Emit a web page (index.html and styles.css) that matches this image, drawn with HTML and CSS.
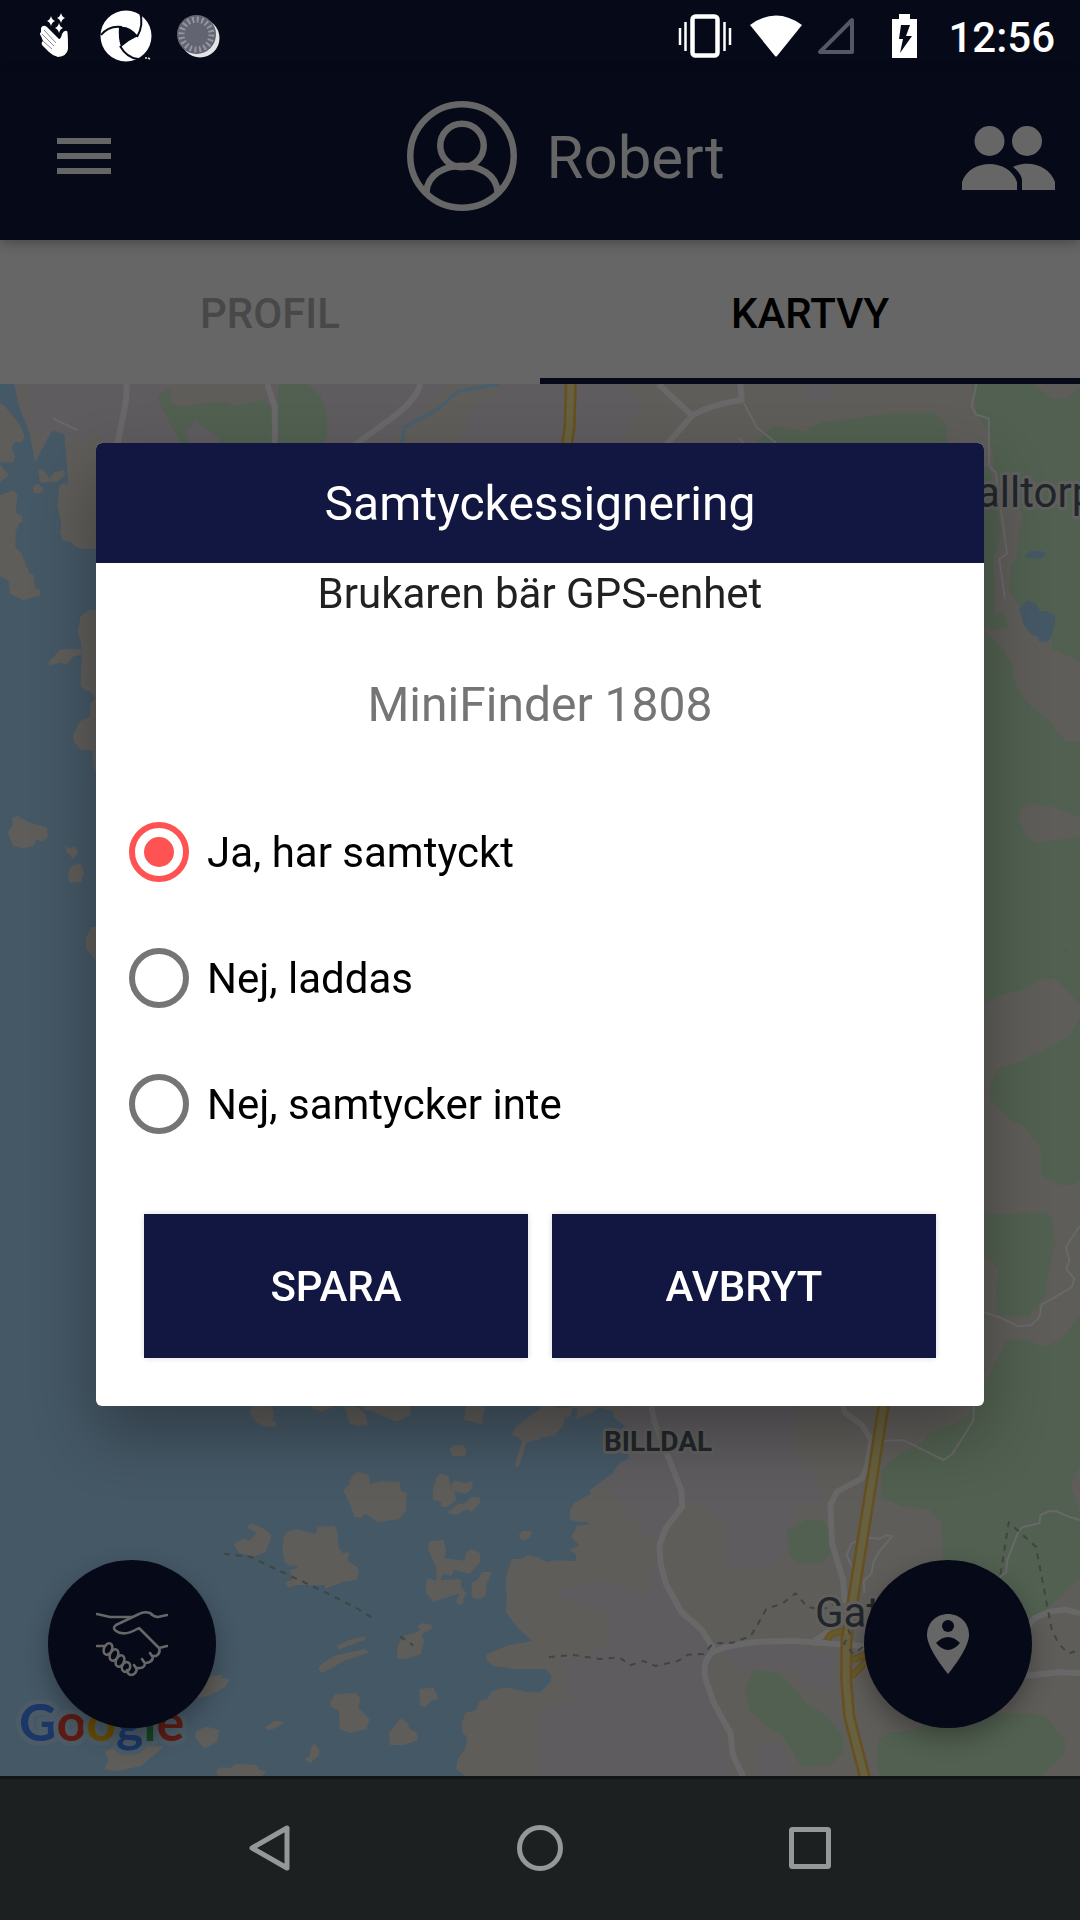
FILE: index.html
```html
<!DOCTYPE html>
<html lang="sv">
<head>
<meta charset="utf-8">
<meta name="viewport" content="width=device-width, initial-scale=1">
<title>Samtyckessignering</title>
<link rel="stylesheet" href="styles.css">
</head>
<body>
<div class="status">
  <div class="status-left">
    <svg width="31" height="46" viewBox="39 14 31 46" fill="#fff" aria-hidden="true">
      <path d="M51 17q1 4 4 5q-3 1-4 5q-1-4-4-5q3-1 4-5zM61 14q1 4 4 5q-3 1-4 5q-1-4-4-5q3-1 4-5zM59 24q1 4 4 5q-3 1-4 5q-1-4-4-5q3-1 4-5z"/>
      <path d="M41 29Q43 25 47 28L59 40Q61 40 62 35Q64 31 67 32Q68 33 68 50Q67 57 58 58Q53 57 49 53L42 46Q41 43 43 42L41 37Q39 35 41 33Z"/>
      <path d="M44 31l12 13M42 35l12 12M43 42l9 8" stroke="#8a8c95" fill="none"/>
    </svg>
    <svg class="swirl" width="52" height="52" viewBox="0 0 52 52" aria-hidden="true">
      <circle cx="26" cy="26" r="25.500" fill="#fff"/>
      <path d="M19 17Q29 15 38 26Q29 30 21 37Q18 28 19 17Z" fill="#060917"/>
      <path d="M1 25Q9 15 22 17M40 2Q44 15 37 27M20 36Q27 48 38 49" fill="none" stroke="#060917" stroke-width="2"/>
      <path d="M43 53v-6h9v6z" fill="#060917"/><path d="M45 48h2M48 48l2 1" stroke="#ddd" stroke-width="1.500"/>
    </svg>
    <svg width="43" height="45" viewBox="0 0 43 45" aria-hidden="true">
      <circle cx="23" cy="24" r="19.500" fill="#e4e4e7"/>
      <circle cx="19.500" cy="20.500" r="19.500" fill="#626471"/>
      <circle cx="19.500" cy="20.500" r="15" fill="none" stroke="#94969f" stroke-width="6" stroke-dasharray="2 2.700"/>
    </svg>
  </div>
  <div class="status-right">
    <svg width="54" height="44" viewBox="0 0 54 44" aria-hidden="true">
      <rect x="14.500" y="2.500" width="25" height="39" rx="3" fill="none" stroke="#fff" stroke-width="4.500"/>
      <path d="M2 14v17M7.500 8v29M46.500 8v29M52 14v17" stroke="#fff" stroke-width="2.500"/>
    </svg>
    <svg class="wifi" width="52" height="42" viewBox="0 0 52 42" fill="#fff" aria-hidden="true"><path d="M0 10Q26-9 52 10L27 41q-1 1-2 0z"/></svg>
    <svg class="signal" width="38" height="38" viewBox="0 0 38 38" fill="none" stroke="#555764" stroke-width="4" stroke-linejoin="round" aria-hidden="true"><path d="M3 35L35 3V35Z"/></svg>
    <svg class="battery" width="25" height="44" viewBox="0 0 25 44" aria-hidden="true"><path d="M7 0h11v5h7v39H0V5h7z" fill="#fff"/><path d="M9 11h9l-4 11h6L8 39l3-14H7z" fill="#060917"/></svg>
    <span class="clock">12:56</span>
  </div>
</div>

<header class="appbar">
  <button class="menu" type="button" aria-label="Meny">
    <svg width="54" height="36" viewBox="0 0 54 36" fill="#666"><path d="M0 0h54v6H0zM0 15h54v6H0zM0 30h54v6H0z"/></svg>
  </button>
  <div class="person">
    <svg width="110" height="110" viewBox="0 0 110 110" fill="none" stroke="#666" stroke-width="6.500" aria-hidden="true">
      <circle cx="55" cy="55" r="51.750"/><circle cx="55" cy="44.500" r="21.750"/>
      <path d="M19.500 91C21 56 89 56 90.500 91"/>
    </svg>
    <span>Robert</span>
  </div>
  <button class="people" type="button" aria-label="Brukare">
    <svg width="94" height="66" viewBox="0 0 94 66" fill="#666">
      <circle cx="27.500" cy="17" r="15"/><circle cx="65" cy="17" r="15"/>
      <path d="M0 66V58C8 34 47 34 55 58V66ZM51 43C68 35 88 43 93 58V66H60V56Q59 49 51 43Z"/>
    </svg>
  </button>
</header>

<nav class="tabs">
  <a class="tab" href="#profil">PROFIL</a>
  <a class="tab active" href="#kartvy" aria-current="page">KARTVY</a>
</nav>

<main class="map">
  <svg class="map-art" viewBox="0 384 1080 1392" preserveAspectRatio="xMidYMid slice" aria-hidden="true">
    <rect class="land" y="384" width="1080" height="1392"/>

    <!-- northern edge -->
    <g transform="translate(0 220) scale(.6887 .3333)">
      <path class="town" d="M85 492H245V560L390 550V492H650L560 680H60V600H0V560L80 520ZM480 492H620L500 680H475ZM690 560L740 492H900L930 560L900 680H660Z"/>
      <path class="green" d="M247 503L247 548L264 563L295 550L328 545L340 558L384 537L397 580V680H320L319 657L284 604L268 636L280 680H265L238 575L228 530ZM404 492H446L466 530L475 580V640L468 680H404Z"/>
      <path class="green" d="M1100 665L1123 618L1168 634L1196 603L1220 602L1293 578H1357L1375 620V680H1105Z"/>
      <path class="town" d="M1168 492H1205L1208 540L1180 553L1168 535Z"/>
      <path class="thin" d="M77 598L112 630M1080 550L1100 625L1127 668M1073 655L1085 680"/>
      <path class="road" d="M184 492L183 540L170 680M388 492L399 560V680M610 492Q607 530 575 585L512 680"/>
      <path class="road" d="M956 492L1005 587Q1030 555 1077 540L1075 492M1005 587L965 680"/>
      <path class="stream" d="M725 492L665 514L635 568L587 622L583 680"/>
      <path class="hw-case" d="M829 480L827 620L823 680"/><path class="hw" d="M829 480L827 620L823 680"/>
    </g>

    <!-- western shore -->
    <path class="water" d="M0 384H14L20 410L29 430L35 462L52 430L64 431L68 480L60 500L62 540L96 548V1776H0Z"/>
    <g transform="translate(0 380) scale(.3333 .6631)">
      <path class="land" d="M46 6L70 26L88 62L84 78L142 84L157 76L194 82L202 110L216 144L243 149L230 162L211 165L194 155L178 160L172 190L185 220L180 232L211 240L222 250L245 255H300V6Z"/>
      <path class="land" d="M0 35L10 37L40 55L60 68L75 86L64 94H44L36 102L46 116L39 124H0ZM0 127L27 144L0 154ZM0 174L40 166L53 174L46 200L67 206V213L56 217L47 230L46 252L63 260L88 291L101 294L105 313L121 318L119 325L70 332L30 322L25 302L0 296ZM114 135H130L148 149L163 139L191 136L196 142L174 153L120 155ZM98 160L114 156L132 166L113 172L100 170ZM300 347H266L241 357L234 380L242 395L246 414L241 460L250 467L272 470L286 480L270 488L271 507L240 515L219 535L222 545L240 557L278 559L282 590H300ZM146 425L183 406H244V414L220 417L198 429L178 426L148 431ZM23 682L38 671L37 660L52 657L86 667L141 675L144 690L127 696L108 693L103 702L70 706L40 703ZM195 703L210 706L228 704L235 713L218 722L199 711ZM203 744L216 732L240 729L253 743L243 757L208 758ZM300 825H274L257 843L258 858L290 877H300Z"/>
      <path class="town" d="M88 0H300V70L250 90L200 94L194 82L157 76L142 84L88 68Z"/>
      <path class="thin" d="M158 58L234 76"/>
    </g>

    <!-- eastern forest -->
    <rect class="green" x="970" y="384" width="110" height="1040"/>
    <g transform="translate(970 380) scale(.3333 .6631)">
      <path class="land" d="M190 6H330V10L292 28H246Z"/>
      <path class="land" d="M0 0L20 50L58 80L74 132L88 180L160 200L144 235L143 262L122 282L117 315L148 342L172 362L245 392V405L330 425V545H285L240 515L170 485L133 455L127 430L100 405L40 378L75 350L70 270L95 230L60 132L0 130ZM145 660L152 647L180 639L250 644L330 659V688L205 698L173 692ZM43 940L98 927L155 920L210 904L255 903L290 920L330 942V960L298 990L155 1027L88 1037L59 1062V1086L125 1117L155 1123L213 1157V1198L265 1214H310L330 1207V1410L275 1446L220 1458L160 1447L110 1447L30 1530V1290Z"/>
      <path class="green" d="M43 1256L100 1259L150 1256H228L248 1266L256 1303L228 1360L229 1378L177 1412H90L75 1398L85 1340L43 1320ZM52 358L60 352H106L113 374L58 377Z"/>
      <path class="water" d="M148 345L172 332L200 338L208 348L230 349L256 356L252 375L236 394L208 395L205 388L184 384L162 370ZM165 265L180 258H215L229 263L214 269H175ZM283 858L292 861L288 864Z"/>
      <path class="thin" d="M22 0L5 40L18 52L56 58L58 130L78 140L111 262L88 270L105 330M43 1406L90 1414L145 1427L185 1425L208 1413L215 1394L245 1386L305 1368L313 1356L289 1340L298 1328L288 1307L330 1275"/>
    </g>

    <!-- archipelago -->
    <rect class="water" y="1390" width="540" height="386"/>
    <g transform="translate(0 1380) scale(.3444 .3333)">
      <path class="land" d="M730 74L726 98L743 127L765 138L797 141L803 129L792 120L795 97L785 74ZM905 74V85L933 95L962 84V74ZM1000 78L1015 130L1035 138L1068 136L1062 105L1040 82ZM1055 74V90L1080 93L1152 126L1192 104V74ZM1352 74L1347 120L1375 126L1403 135L1399 111L1406 96L1409 74ZM1570 85L1520 122L1497 140L1487 166L1506 171L1516 183L1494 259L1506 261L1529 186L1570 178ZM1306 207L1320 195L1346 196L1355 213L1349 228H1314ZM996 331L1013 315L1020 291L1038 275L1071 285L1073 313L1105 304L1162 306L1163 332L1180 340L1179 390L1159 418L1097 426L1061 401L1047 413L1029 410L1014 366ZM1257 360L1257 329L1268 290L1280 281L1302 288L1308 317L1319 302L1350 310L1369 303L1373 324L1353 341L1320 333L1324 360L1300 380H1281V366ZM1296 399L1330 373L1352 370L1368 350L1392 351L1395 368L1369 395L1356 387L1324 404ZM679 492L707 475L726 482L744 459L716 441L729 430L767 446L789 467L772 515L740 529L693 518ZM820 515L824 470L834 455L860 448L917 461L922 440L972 437L980 455L983 502L995 520L1013 516L1010 544L1037 561L1042 580L1033 600L997 605L943 627L944 615H862L838 623L827 608L850 598L841 571L863 565V558L838 556L826 545ZM1243 510L1245 483L1288 480L1295 512L1290 535L1350 542L1351 520L1369 508L1394 520V547L1363 582L1318 569L1310 588L1286 582L1280 600L1338 598L1339 621L1355 640L1345 657V670L1333 676L1324 665L1334 640L1258 666L1236 637L1240 595L1267 603V562ZM1369 643L1370 610L1388 598L1399 576L1429 575L1413 612L1412 643L1397 657L1374 655ZM1505 468L1517 453L1547 454L1537 475L1517 482ZM1570 532L1530 526L1513 537H1487L1471 580L1468 623L1472 655L1469 697L1500 740L1545 783L1477 796L1412 823V840L1433 858L1495 867H1570Z"/>
      <path class="land" d="M981 810V796L1012 780L1060 768V779ZM924 869L931 854L970 827L1060 807L1072 817L1000 842L936 879ZM1152 838L1155 795L1171 768L1202 760L1220 750L1213 740L1225 729L1254 734L1253 748L1223 763L1232 780L1223 821L1188 835ZM570 955L600 890L648 884L640 894L667 897L655 920L610 946ZM1217 927L1258 923L1275 956L1253 963L1235 981L1220 976ZM959 967L973 942L1034 939L1046 953L1041 983L1074 1019L1063 1048L1015 1060L986 1046L984 992L962 981ZM769 1043L797 1022L829 1027L799 1045L778 1050ZM1129 1060L1163 1015L1183 1028L1189 1046L1210 1058L1214 1080L1175 1095H1132ZM567 1054L600 1040L636 1049L630 1085L594 1106L568 1076ZM885 1139L901 1125L904 1100L913 1091L927 1110V1126L902 1149ZM302 1168L314 1140L305 1115L340 1095L475 1100L410 1158L340 1173ZM627 1173L640 1162L668 1164L686 1151L745 1155L755 1169L773 1175L760 1190H635ZM1570 938L1530 936L1470 922L1428 934L1413 960L1394 961L1382 990L1352 998L1342 1025L1343 1060L1356 1070L1352 1105L1329 1137L1324 1168L1355 1190H1570Z"/>
      <path class="dash" d="M650 521L730 532L800 567L945 637L1040 687L1080 713M1162 770L1200 796"/>
    </g>

    <!-- Billdal and the coast road -->
    <g transform="translate(540 1380) scale(.3444 .3333)">
      <path class="town" d="M250 75H745V240L800 290L820 360L730 390L740 470L690 560L540 570L530 420L430 350L340 500L200 340L150 310ZM30 640L190 600L300 640L350 550L410 700L480 790L700 790L870 820L830 950L730 870L600 880L500 810L490 900L560 1190H0V990L90 960L60 850L200 800L190 700ZM640 1100L690 1090L725 1150V1190H620Z"/>
      <path class="green" d="M717 450L773 421H820L844 458V520L816 550H745L723 522ZM620 869L695 880L747 932L770 970L827 1003L880 1068V1120L840 1157H757L704 1066L657 1038L608 990L595 928ZM980 1080L1010 1060L1090 1048L1150 1020L1260 1000H1440L1470 1010L1524 1080V1122L1455 1190H990L979 1160ZM1290 75L1210 130L1130 157L1110 190L1040 225L992 270V353L1055 380L1130 388L1166 427L1175 600L1250 760L1400 760L1568 592V400L1541 317L1568 255V75Z"/>
      <path class="water" d="M-2 173L42 167L67 137L71 112L88 110L95 84L110 84L105 118L150 98L172 82L215 95L212 110L246 137L258 235L230 250L210 280L143 332L150 340L98 370L87 390V418L102 424L140 427L145 433L107 437L90 472L114 495L85 510L105 523L104 543L40 541L22 546L-2 536ZM30 75H92V80L50 84ZM-2 867H16L32 884V905L-2 938Z"/>
      <path class="thin" d="M1260 75L1258 122L1197 222L1172 240L1057 181L1000 182M942 640L940 603L963 580L968 545L985 515L1023 468L1005 466L985 477L950 472L905 490L890 525L910 570M1568 420L1540 412L1500 394H1478L1453 405L1450 430L1403 441L1390 452L1357 540L1353 577L1335 592"/>
      <path class="road" d="M323 75L333 130L372 230L410 330L413 380L365 445L347 495L350 550L365 610L410 695L470 750L503 805M590 1190L560 1125L553 1060L505 970L480 895Q470 840 503 815Q560 790 640 785L740 783L900 795L950 800M880 75L885 98L935 135L962 180L950 260L935 295L862 335L843 375L848 490L880 600L885 670M800 798V780L860 740M1400 888L1510 877L1568 880M1400 760L1435 715L1480 695L1525 689L1568 700"/>
      <path class="hw-case ramp" d="M835 780Q840 755 880 755M905 840L955 820M905 890L955 835"/>
      <path class="hw ramp" d="M835 780Q840 755 880 755M905 840L955 820M905 890L955 835"/>
      <path class="hw-case" d="M1000 60L970 260L915 620L890 780L889 900L898 1010L945 1200"/>
      <path class="hw" d="M1000 60L970 260L915 620L890 780L889 900L898 1010L945 1200"/>
      <path class="dash" d="M26 831L95 825L175 837L230 832L262 856L300 843L335 858L400 843L430 824L475 822L503 790L560 788L612 768L628 740L657 687L705 670L742 640L775 680L820 690L865 665L900 760L883 790L910 822L945 795M1337 583L1361 427L1440 500L1485 745L1505 790L1535 821L1568 808"/>
    </g>

    <text class="place" x="977" y="507" font-size="42">alltorp</text>
    <text class="place area" x="604" y="1451" font-size="28">BILLDAL</text>
    <text class="place" x="815" y="1627" font-size="42">Gat</text>
    <text class="google" x="19" y="1741" font-size="52"><tspan fill="#1b3767">G</tspan><tspan fill="#5e1b14">o</tspan><tspan fill="#654b02">o</tspan><tspan fill="#1b3767">g</tspan><tspan fill="#154421">l</tspan><tspan fill="#5e1b14">e</tspan></text>
  </svg>

  <div class="fabs">
    <button class="fab" type="button" aria-label="Samtycke">
      <svg width="72" height="68" viewBox="0 0 72 68" fill="none" stroke="#676767" stroke-width="2.600" stroke-linejoin="round" stroke-linecap="round">
        <path d="M1 4L14 7H36M71 5L62 7Q58 7 54 3Q48 1 43 4L20 15Q16 18 20 21Q28 27 43 18L63 38Q65 43 60 46H57Q57 53 49 53Q49 59 41 58Q40 65 35 65Q31 64 31 60M71 36L63 38M1 36H8M48 52L46 49M56 46L54 43M40 58L38 55"/>
        <ellipse cx="12" cy="39" rx="4" ry="6" transform="rotate(25 12 39)"/><ellipse cx="18" cy="45" rx="4" ry="6" transform="rotate(25 18 45)"/><ellipse cx="24" cy="51" rx="4" ry="6" transform="rotate(25 24 51)"/><ellipse cx="30" cy="57" rx="4" ry="5" transform="rotate(25 30 57)"/>
      </svg>
    </button>
    <button class="fab" type="button" aria-label="Visa position">
      <svg width="42" height="60" viewBox="0 0 42 60"><path d="M21 0C9 0 0 9 0 21C0 35 21 60 21 60S42 35 42 21C42 9 33 0 21 0Z" fill="#666"/><circle cx="21" cy="12" r="6" fill="#060917"/><path d="M9 29Q21 17 33 29Q21 43 9 29Z" fill="#060917"/></svg>
    </button>
  </div>
</main>

<nav class="sysnav">
  <button type="button" aria-label="Tillbaka"><svg width="46" height="46" viewBox="0 0 46 46"><path d="M5 23L40 3V43Z"/></svg></button>
  <button type="button" aria-label="Hem"><svg width="46" height="46" viewBox="0 0 46 46"><circle cx="23" cy="23" r="20.500"/></svg></button>
  <button type="button" aria-label="Översikt"><svg width="46" height="46" viewBox="0 0 46 46"><rect x="4.500" y="4.500" width="37" height="37" rx="1"/></svg></button>
</nav>

<div class="overlay">
  <form class="dialog" role="dialog" aria-labelledby="dialog-title">
    <h1 class="dialog-title" id="dialog-title">Samtyckessignering</h1>
    <p class="lead">Brukaren bär GPS-enhet</p>
    <p class="device">MiniFinder 1808</p>
    <div class="choices">
      <label class="choice"><input type="radio" name="consent" checked><span>Ja, har samtyckt</span></label>
      <label class="choice"><input type="radio" name="consent"><span>Nej, laddas</span></label>
      <label class="choice"><input type="radio" name="consent"><span>Nej, samtycker inte</span></label>
    </div>
    <div class="actions">
      <button class="action" type="button">SPARA</button>
      <button class="action" type="button">AVBRYT</button>
    </div>
  </form>
</div>
</body>
</html>
```
FILE: styles.css
```css
* { box-sizing: border-box; }

body {
  margin: 0;
  min-height: 100vh;
  display: flex;
  flex-direction: column;
  background: #060917;
  font-family: Roboto, "Liberation Sans", sans-serif;
  font-size: 42px;
}

button {
  border: 0;
  padding: 0;
  background: none;
  color: inherit;
  font: inherit;
}

svg { display: block; flex: none; }

/* System status bar */
.status {
  height: 72px;
  padding: 0 25px 0 39px;
  display: flex;
  justify-content: space-between;
  color: #fff;
}
.status-left, .status-right { display: flex; align-items: center; }
.status-left { gap: 30px; }
.swirl { margin-right: -5px; }
.wifi { margin-left: 18px; }
.signal { margin-left: 15px; }
.battery { margin-left: 37px; }
.clock { margin-left: 31px; padding-top: 2px; font-weight: 500; }

/* App bar */
.appbar {
  position: relative;
  z-index: 1;
  height: 168px;
  display: flex;
  align-items: center;
  background: #060917;
  color: #666;
  box-shadow: 0 3px 12px rgba(0, 0, 0, .3);
}
.menu { width: 170px; padding-left: 57px; }
.people { width: 118px; padding-top: 2px; }
.person {
  flex: 1;
  display: flex;
  align-items: center;
  justify-content: center;
  gap: 29px;
  font-size: 60px;
}
.person span { padding-top: 2px; }

/* Tabs */
.tabs { display: flex; height: 144px; background: #666; }
.tab {
  flex: 1;
  display: flex;
  align-items: center;
  justify-content: center;
  padding-top: 8px;
  border-bottom: 6px solid transparent;
  color: #484848;
  font-weight: 500;
  text-decoration: none;
}
.tab.active { color: #000; border-color: #060917; }

/* Map */
.map { position: relative; flex: 1; overflow: hidden; display: flex; align-items: flex-end; }
.map-art { position: absolute; inset: 0; width: 100%; height: 100%; }
.map-art path { vector-effect: non-scaling-stroke; }
.land { fill: #5f5d5a; }
.town { fill: #5f5c60; }
.green { fill: #516050; }
.water { fill: #455866; }
.thin, .road, .stream, .dash, .hw, .hw-case { fill: none; stroke-linejoin: round; }
.thin { stroke: #696869; stroke-width: 2px; }
.road { stroke: #686868; stroke-width: 6px; }
.stream { stroke: #455f70; stroke-width: 3px; }
.dash { stroke: #3f463f; stroke-width: 2px; stroke-dasharray: 6px 6px; }
.hw-case { stroke: #66501f; stroke-width: 12px; }
.hw { stroke: #676041; stroke-width: 7px; }
.hw-case.ramp { stroke-width: 7px; }
.hw.ramp { stroke: #66592c; stroke-width: 4px; }
.place {
  fill: #22262a;
  stroke: #60605e;
  stroke-width: 6px;
  stroke-linejoin: round;
  paint-order: stroke;
}
.place.area { font-weight: 700; }
.google {
  font-family: Lato, sans-serif;
  font-weight: 700;
  stroke: #4c5b66;
  stroke-width: 10px;
  stroke-linejoin: round;
  paint-order: stroke;
}

.fabs {
  position: relative;
  flex: 1;
  display: flex;
  justify-content: space-between;
  padding: 48px;
}
.fab {
  width: 168px;
  height: 168px;
  display: flex;
  align-items: center;
  justify-content: center;
  border-radius: 50%;
  background: #060917;
  box-shadow: 0 10px 24px rgba(0, 0, 0, .3);
}

/* System navigation */
.sysnav {
  height: 144px;
  padding: 0 135px 3px;
  display: flex;
  border-top: 3px solid #131517;
  background: #1c2021;
}
.sysnav button { flex: 1; display: flex; align-items: center; justify-content: center; }
.sysnav svg { fill: none; stroke: #969798; stroke-width: 5px; stroke-linejoin: round; }

/* Consent dialog */
.overlay {
  position: fixed;
  z-index: 2;
  inset: 72px 0 144px;
  padding: 0 96px;
  display: flex;
  align-items: center;
}
.dialog {
  flex: 1;
  overflow: hidden;
  border-radius: 6px;
  background: #fff;
  color: #000;
  text-align: center;
  box-shadow: 0 28px 64px rgba(0, 0, 0, .32);
}
.dialog-title, .lead, .device { margin: 0; font-weight: 400; }
.dialog-title {
  padding-top: 2px;
  background: #111740;
  color: #fff;
  font-size: 48px;
  line-height: 118px;
}
.lead { color: #212121; line-height: 62px; }
.device { margin-top: 48px; color: #757575; font-size: 48px; line-height: 64px; }
.choices { margin-top: 52px; padding: 0 33px; }
.choice { display: flex; align-items: center; gap: 18px; height: 126px; }
.choice span { padding-top: 2px; }
.choice input {
  appearance: none;
  width: 60px;
  height: 60px;
  margin: 0;
  border: 6px solid #757575;
  border-radius: 50%;
}
.choice input:checked {
  border-color: #ff5252;
  padding: 9px;
  background: #ff5252 content-box;
}
.actions { display: flex; gap: 24px; padding: 47px 48px 48px; }
.action {
  flex: 1;
  height: 144px;
  padding-top: 2px;
  background: #111740;
  color: #fff;
  font-weight: 500;
  box-shadow: 0 0 6px rgba(0, 0, 0, .15);
}
```
